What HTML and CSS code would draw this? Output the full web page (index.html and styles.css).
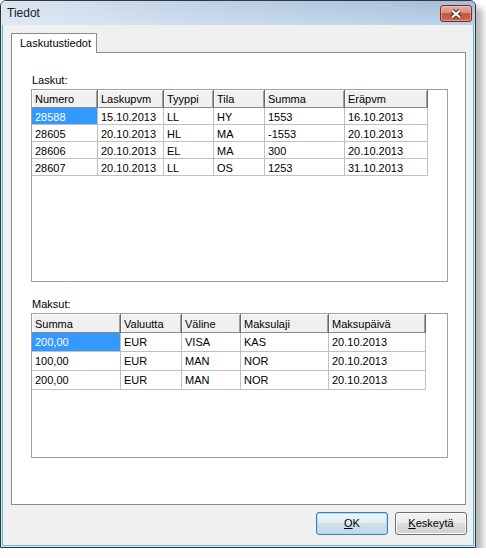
FILE: index.html
```html
<!DOCTYPE html>
<html lang="fi">
<head>
<meta charset="utf-8">
<title>Tiedot</title>
<link rel="stylesheet" href="styles.css">
</head>
<body>
<div class="window">
  <div class="titlebar">
    <span class="title">Tiedot</span>
    <div class="close">
      <svg width="12" height="10" viewBox="0 0 12 10">
        <path d="M2 1.5 L10 8.5 M10 1.5 L2 8.5" stroke="#4a2f2a" stroke-width="4.2" fill="none"/>
        <path d="M2 1.5 L10 8.5 M10 1.5 L2 8.5" stroke="#ffffff" stroke-width="2.2" fill="none"/>
      </svg>
    </div>
  </div>
  <div class="frame">
    <div class="client">
      <div class="tabs"><div class="tab">Laskutustiedot</div></div>
      <div class="panel">
        <div class="label">Laskut:</div>
        <div class="gridbox gb-laskut">
          <div class="grid g-laskut">
            <div class="hcell">Numero</div><div class="hcell">Laskupvm</div><div class="hcell">Tyyppi</div><div class="hcell">Tila</div><div class="hcell">Summa</div><div class="hcell">Eräpvm</div>
            <div class="cell sel">28588</div><div class="cell">15.10.2013</div><div class="cell">LL</div><div class="cell">HY</div><div class="cell">1553</div><div class="cell">16.10.2013</div>
            <div class="cell">28605</div><div class="cell">20.10.2013</div><div class="cell">HL</div><div class="cell">MA</div><div class="cell">-1553</div><div class="cell">20.10.2013</div>
            <div class="cell">28606</div><div class="cell">20.10.2013</div><div class="cell">EL</div><div class="cell">MA</div><div class="cell">300</div><div class="cell">20.10.2013</div>
            <div class="cell">28607</div><div class="cell">20.10.2013</div><div class="cell">LL</div><div class="cell">OS</div><div class="cell">1253</div><div class="cell">31.10.2013</div>
          </div>
        </div>
        <div class="label label-maksut">Maksut:</div>
        <div class="gridbox gb-maksut">
          <div class="grid g-maksut">
            <div class="hcell">Summa</div><div class="hcell">Valuutta</div><div class="hcell">Väline</div><div class="hcell">Maksulaji</div><div class="hcell">Maksupäivä</div>
            <div class="cell sel">200,00</div><div class="cell">EUR</div><div class="cell">VISA</div><div class="cell">KAS</div><div class="cell">20.10.2013</div>
            <div class="cell">100,00</div><div class="cell">EUR</div><div class="cell">MAN</div><div class="cell">NOR</div><div class="cell">20.10.2013</div>
            <div class="cell">200,00</div><div class="cell">EUR</div><div class="cell">MAN</div><div class="cell">NOR</div><div class="cell">20.10.2013</div>
          </div>
        </div>
      </div>
      <div class="buttons">
        <button class="btn btn-default"><u>O</u>K</button>
        <button class="btn"><u>K</u>eskeytä</button>
      </div>
    </div>
  </div>
</div>
</body>
</html>
```

FILE: styles.css
```css
html, body {
  margin: 0;
  background: #ffffff;
}
body {
  font-family: "Liberation Sans", Arial, sans-serif;
  font-size: 11px;
  color: #000;
}
.window {
  width: 476px;
  height: 548px;
  box-sizing: border-box;
  border: 1px solid #363636;
  border-radius: 6px 6px 0 0;
  box-shadow: 7px 7px 7px rgba(0, 0, 0, 0.28);
  display: flex;
  flex-direction: column;
  overflow: hidden;
  background: #d6e3f1;
}
.titlebar {
  flex: none;
  height: 24px;
  display: flex;
  align-items: flex-start;
  background:
    linear-gradient(to right, rgba(236, 242, 249, 0.75) 0%, rgba(236, 242, 249, 0.35) 45%, rgba(236, 242, 249, 0) 100%),
    linear-gradient(to bottom, #a3bdd9 0%, #bad1ea 100%);
}
.title {
  font-size: 12px;
  line-height: 24px;
  padding-left: 6px;
  color: #1a1a1a;
}
.close {
  margin-left: auto;
  margin-top: 4px;
  margin-right: 3px;
  width: 32px;
  height: 17px;
  box-sizing: border-box;
  border: 1px solid #6b2f28;
  border-radius: 3px;
  background: linear-gradient(to bottom, #e9ab9c 0%, #dc8e7b 45%, #c6503a 52%, #cf6a53 100%);
  box-shadow: inset 0 0 0 1px rgba(255, 220, 210, 0.45);
  display: flex;
  align-items: center;
  justify-content: center;
}
.frame {
  flex: 1;
  display: flex;
  padding: 0 1px 1px;
  background: #dbe7f4;
}
.client {
  flex: 1;
  display: flex;
  flex-direction: column;
  border: 1px solid #55bde8;
  border-top: none;
  background: #f0f0f0;
  padding: 8px 6px 0 8px;
}
.tabs {
  display: flex;
  height: 20px;
}
.tab {
  position: relative;
  z-index: 1;
  width: 86px;
  height: 20px;
  box-sizing: border-box;
  border: 1px solid #898c95;
  border-bottom: none;
  background: #fff;
  padding-left: 8px;
  line-height: 19px;
}
.panel {
  margin-top: -1px;
  width: 455px;
  height: 453px;
  box-sizing: border-box;
  border: 1px solid #898c95;
  background: #fff;
  padding: 21px 0 0 19px;
}
.label {
  height: 13px;
  line-height: 13px;
  padding-left: 1px;
}
.label-maksut {
  margin-top: 16px;
}
.gridbox {
  margin-top: 2px;
  width: 417px;
  box-sizing: border-box;
  border: 1px solid #a0a0a0;
  background: #fff;
}
.gb-laskut { height: 193px; }
.gb-maksut { height: 145px; }
.grid {
  display: grid;
  justify-content: start;
}
.g-laskut {
  grid-template-columns: 66px 66px 50px 51px 80px 83px;
  grid-template-rows: 18px repeat(4, 17px);
}
.g-maksut {
  grid-template-columns: 89px 61px 59px 88px 97px;
  grid-template-rows: repeat(4, 19px);
}
.hcell, .cell {
  box-sizing: border-box;
  padding-left: 3px;
  white-space: nowrap;
  overflow: hidden;
}
.hcell {
  background: #f0f0f0;
  border-right: 1px solid #696969;
  border-bottom: 1px solid #8a8a8a;
  box-shadow: inset 1px 1px 0 #ffffff, inset -1px 0 0 #a0a0a0;
}
.cell {
  border-right: 1px solid #c0c0c0;
  border-bottom: 1px solid #c0c0c0;
}
.g-laskut .hcell { padding-top: 2px; line-height: 15px; }
.g-laskut .cell { padding-top: 1px; line-height: 16px; }
.g-maksut .hcell { padding-top: 2px; line-height: 16px; }
.g-maksut .cell { padding-top: 1px; line-height: 17px; }
.cell.sel {
  background: #3399ff;
  color: #fff;
}
.buttons {
  display: flex;
  justify-content: flex-end;
  gap: 7px;
  margin-top: 7px;
}
.btn {
  width: 72px;
  height: 23px;
  box-sizing: border-box;
  margin: 0;
  padding: 0 0 2px;
  font: inherit;
  font-size: 11px;
  color: #000;
  border: 1px solid #707070;
  border-radius: 3px;
  background: linear-gradient(to bottom, #f2f2f2 0%, #ebebeb 50%, #dddddd 50%, #cfcfcf 100%);
  box-shadow: inset 0 0 0 1px #fbfbfb;
}
.btn-default {
  border-color: #3c7fb1;
  background: linear-gradient(to bottom, #eef5fa 0%, #e2ecf4 50%, #d0e0ec 50%, #c4d7e7 100%);
  box-shadow: inset 0 0 0 1px #a9ddf8;
}
.btn u {
  text-decoration: underline;
  text-underline-offset: 1px;
}
```
